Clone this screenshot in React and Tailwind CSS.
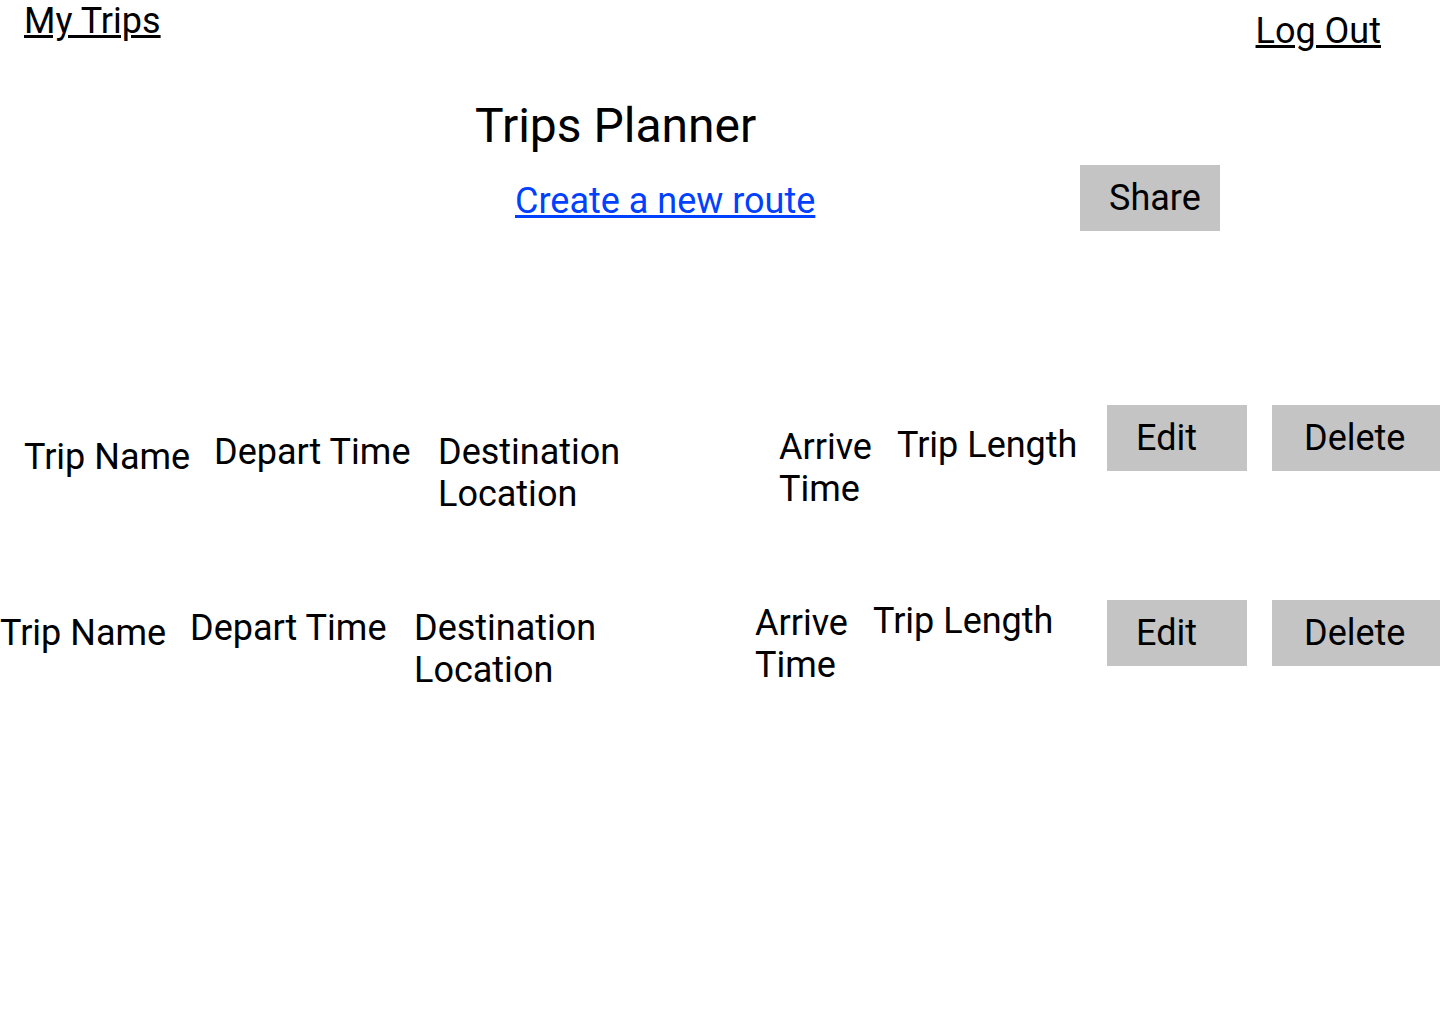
import React from "react";

const font = { fontFamily: "Roboto, 'Noto Sans', Arial, sans-serif" };

function Btn({ label, w, pl }) {
  return (
    <button
      type="button"
      className={`flex items-center h-[66px] bg-[#c4c4c4] text-black text-[36px] leading-[42px] shrink-0 ${w} ${pl}`}
    >
      {label}
    </button>
  );
}

function TripRow({ padLeft, textTop, rowTop }) {
  return (
    <div className={`flex items-start ${rowTop}`}>
      <div className={`flex items-start w-[1107px] shrink-0 ${padLeft} ${textTop}`}>
        <div className="w-[190px] mt-[12px] shrink-0">Trip Name</div>
        <div className="w-[224px] mt-[7px] shrink-0">Depart Time</div>
        <div className="w-[341px] mt-[7px] shrink-0">
          Destination
          <br />
          Location
        </div>
        <div className="w-[118px] mt-[2px] shrink-0">Arrive Time</div>
        <div className="shrink-0">Trip Length</div>
      </div>
      <Btn label="Edit" w="w-[140px]" pl="pl-[29px]" />
      <div className="w-[25px] shrink-0" />
      <Btn label="Delete" w="w-[168px]" pl="pl-[32px]" />
    </div>
  );
}

export default function App() {
  return (
    <div
      className="min-h-screen w-[1440px] bg-white text-black text-[36px] leading-[42px] overflow-hidden"
      style={font}
    >
      <header className="flex justify-between items-start">
        <a href="#" className="ml-[24px] mt-0 underline text-black">
          My Trips
        </a>
        <a href="#" className="mr-[59px] mt-[10px] underline text-black">
          Log Out
        </a>
      </header>

      <h1 className="ml-[475px] mt-[46px] text-[48px] leading-[56px] font-normal">
        Trips Planner
      </h1>

      <div className="flex items-start mt-[11px] pl-[515px]">
        <div className="w-[565px] mt-[15px]">
          <a href="#" className="underline text-[#0040ff]">
            Create a new route
          </a>
        </div>
        <button
          type="button"
          className="flex items-center w-[140px] h-[66px] pl-[29px] bg-[#c4c4c4] text-black text-[36px] leading-[42px]"
        >
          Share
        </button>
      </div>

      <TripRow padLeft="pl-[24px]" textTop="mt-[19px]" rowTop="mt-[174px]" />
      <TripRow padLeft="pl-0" textTop="mt-0" rowTop="mt-[85px]" />
    </div>
  );
}
